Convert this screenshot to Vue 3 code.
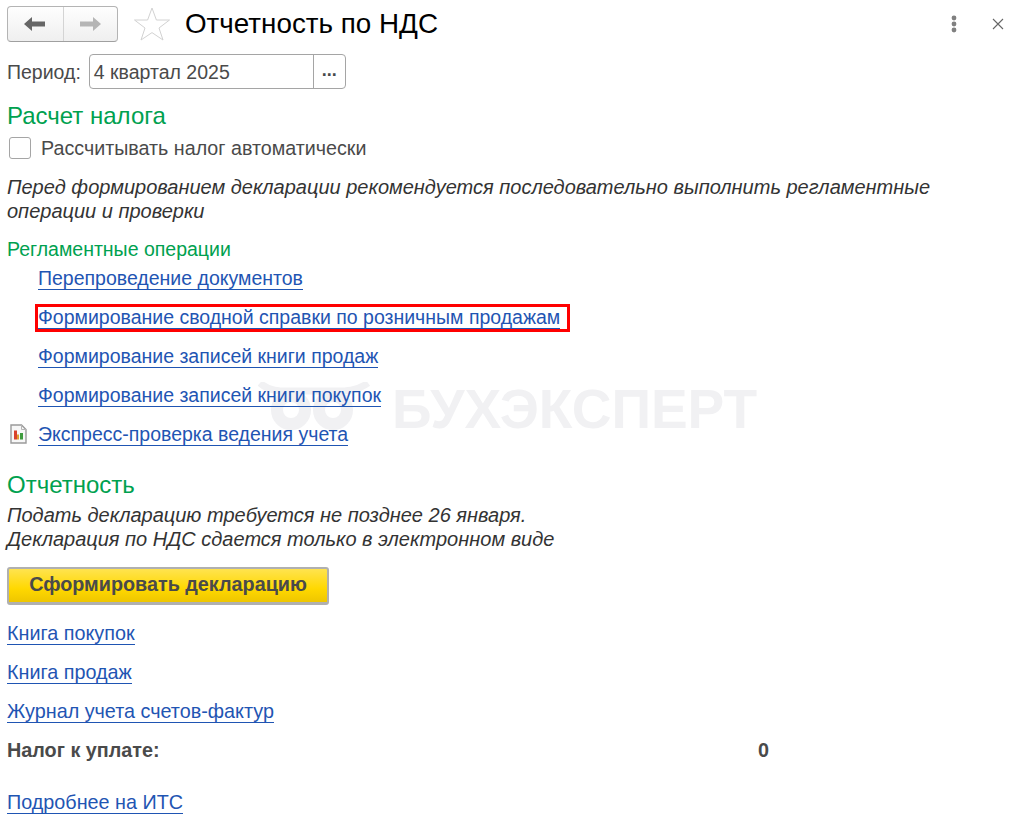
<template>
  <div class="page">
    <div class="watermark">
      <svg class="wm-logo" width="116" height="54" viewBox="0 0 116 54">
        <path d="M2 1 C12 10 24 9 34 9 L74 9 C84 9 98 10 110 1" fill="none" stroke="#f1f1f3" stroke-width="7" />
        <circle cx="33" cy="28" r="14" fill="none" stroke="#f1f1f3" stroke-width="12" />
        <circle cx="75" cy="28" r="14" fill="none" stroke="#f1f1f3" stroke-width="12" />
      </svg>
      <span>БУХЭКСПЕРТ</span>
    </div>

    <div class="header">
      <div class="nav">
        <button class="nav-btn">
          <svg width="22" height="16" viewBox="0 0 22 16"><path d="M0 8 L8 1 V5.5 H21 V10.5 H8 V15 Z" fill="#666" /></svg>
        </button>
        <button class="nav-btn">
          <svg width="22" height="16" viewBox="0 0 22 16"><path d="M22 8 L14 1 V5.5 H1 V10.5 H14 V15 Z" fill="#b5b5b5" /></svg>
        </button>
      </div>
      <svg class="star" width="38" height="34" viewBox="0 0 38 34">
        <path d="M19 1 L23.4 13 L36.5 13 L26 21 L30 33 L19 25.6 L8 33 L12 21 L1.5 13 L14.6 13 Z" fill="none" stroke="#d2d2d2" stroke-width="1" />
      </svg>
      <h1>Отчетность по НДС</h1>
      <div class="window-btns">
        <svg width="8" height="18" viewBox="0 0 8 18">
          <circle cx="4" cy="3" r="2.4" fill="#808080" />
          <circle cx="4" cy="9" r="2.4" fill="#808080" />
          <circle cx="4" cy="15" r="2.4" fill="#808080" />
        </svg>
        <svg width="12" height="12" viewBox="0 0 12 12">
          <path d="M1 1 L11 11 M11 1 L1 11" stroke="#666" stroke-width="1.1" fill="none" />
        </svg>
      </div>
    </div>

    <div class="period">
      <span class="period-label">Период:</span>
      <div class="period-input">
        <span class="period-value">4 квартал 2025</span>
        <span class="period-pick">...</span>
      </div>
    </div>

    <h2 class="section">Расчет налога</h2>
    <label class="check">
      <span class="box"></span>
      <span>Рассчитывать налог автоматически</span>
    </label>
    <p class="note first">Перед формированием декларации рекомендуется последовательно выполнить регламентные<br />операции и проверки</p>

    <h3 class="group">Регламентные операции</h3>
    <div class="ops">
      <div v-for="op in operations" :key="op.text" class="op" :class="{ marked: op.marked }">
        <svg v-if="op.icon" class="op-icon" width="17" height="20" viewBox="0 0 17 20">
          <path d="M1 1 H11.5 L16 5.5 V19 H1 Z" fill="#f7f7f7" stroke="#9a9a9a" stroke-width="1.4" />
          <path d="M11.5 1 V5.5 H16" fill="none" stroke="#b5b5b5" />
          <rect x="4" y="6.5" width="3" height="9" fill="#d9412b" />
          <rect x="7" y="10.5" width="2" height="5" fill="#e0a030" />
          <rect x="10" y="9" width="3" height="6.5" fill="#3f9c3f" />
        </svg>
        <a href="#" @click.prevent>{{ op.text }}</a>
      </div>
    </div>

    <h2 class="section report">Отчетность</h2>
    <p class="note report-note">Подать декларацию требуется не позднее 26 января.<br />Декларация по НДС сдается только в электронном виде</p>

    <button class="primary">Сформировать декларацию</button>

    <div class="links">
      <a v-for="l in links" :key="l" href="#" @click.prevent>{{ l }}</a>
    </div>

    <div class="tax">
      <b class="tax-label">Налог к уплате:</b>
      <b class="tax-value">0</b>
    </div>

    <a class="its" href="#" @click.prevent>Подробнее на ИТС</a>
  </div>
</template>

<script setup>
const operations = [
  { text: 'Перепроведение документов' },
  { text: 'Формирование сводной справки по розничным продажам', marked: true },
  { text: 'Формирование записей книги продаж' },
  { text: 'Формирование записей книги покупок' },
  { text: 'Экспресс-проверка ведения учета', icon: true }
]

const links = ['Книга покупок', 'Книга продаж', 'Журнал учета счетов-фактур']
</script>

<style>
html, body {
  background: #fff;
}
</style>

<style scoped>
.page {
  position: relative;
  width: 1012px;
  height: 821px;
  overflow: hidden;
  box-sizing: border-box;
  padding: 5px 7px 0;
  font-family: "Liberation Sans", Arial, sans-serif;
  font-size: 19.5px;
  line-height: 22px;
  color: #4a4a4a;
  background: #fff;
}

.watermark {
  position: absolute;
  left: 258px;
  top: 382px;
  display: flex;
  align-items: center;
  gap: 18px;
  font-size: 55px;
  line-height: 54px;
  font-weight: bold;
  color: #f1f1f3;
}

.wm-logo {
  width: 116px;
  height: 54px;
}

.header {
  position: relative;
  display: flex;
  align-items: center;
  height: 38px;
}

.nav {
  display: flex;
  width: 111px;
  height: 36px;
  box-sizing: border-box;
  border: 1px solid #b4b4b4;
  border-bottom-color: #a0a0a0;
  border-radius: 4px;
  background: linear-gradient(#fefefe, #efefef);
}

.nav-btn {
  width: 55px;
  padding: 0;
  border: none;
  background: none;
  display: flex;
  align-items: center;
  justify-content: center;
}

.nav-btn + .nav-btn {
  border-left: 1px solid #d4d4d4;
}

.star {
  margin-left: 15px;
}

h1 {
  margin: 0 0 0 14px;
  font-size: 27.8px;
  line-height: 36px;
  font-weight: normal;
  color: #000;
}

.window-btns {
  margin-left: auto;
  margin-right: 1px;
  display: flex;
  align-items: center;
  gap: 34px;
}

.period {
  display: flex;
  align-items: center;
  gap: 8px;
  margin-top: 10px;
  height: 36px;
}

.period-label {
  padding-top: 1px;
}

.period-input {
  display: flex;
  width: 257px;
  height: 35px;
  box-sizing: border-box;
  border: 1px solid #a5a5a5;
  border-radius: 4px;
  background: #fff;
}

.period-value {
  flex: 1;
  padding-left: 4px;
  line-height: 34px;
}

.period-pick {
  width: 31px;
  border-left: 1px solid #a5a5a5;
  text-align: center;
  font-size: 18px;
  font-weight: bold;
  line-height: 30px;
}

.section {
  margin: 0;
  font-size: 24px;
  line-height: 26px;
  font-weight: normal;
  color: #00a14f;
}

.period + .section {
  margin-top: 14px;
}

.check {
  display: flex;
  align-items: center;
  gap: 10px;
  margin-top: 7px;
  height: 24px;
  padding-left: 2px;
  font-size: 19.7px;
}

.box {
  width: 22px;
  height: 22px;
  box-sizing: border-box;
  border: 1px solid #a5a5a5;
  border-radius: 3px;
}

.note {
  margin: 0;
  font-size: 20px;
  font-style: italic;
  line-height: 24px;
  color: #333;
}

.note.first {
  margin-top: 15px;
}

.note.report-note {
  margin-top: 5px;
}

.group {
  margin: 15px 0 0;
  font-size: 19.5px;
  line-height: 22px;
  font-weight: normal;
  color: #00a14f;
}

.ops {
  margin-top: 6px;
}

.op {
  position: relative;
  height: 39px;
  padding-left: 31px;
  line-height: 24px;
}

.op-icon {
  position: absolute;
  left: 3px;
  top: 2px;
}

a {
  color: #1f55b3;
  text-decoration: none;
  border-bottom: 1px solid #1f55b3;
}

.op.marked::after {
  content: "";
  position: absolute;
  left: 28px;
  top: -1px;
  width: 535px;
  height: 28px;
  box-sizing: border-box;
  border: 3px solid #f00;
}

.section.report {
  margin-top: 11px;
}

.primary {
  display: block;
  margin-top: 16px;
  width: 322px;
  height: 38px;
  padding: 0 0 2px;
  border: 2px solid #b0b0b0;
  border-bottom-width: 3px;
  border-radius: 3px;
  background: linear-gradient(#ffe34f, #ffd800 60%, #eec600);
  font-family: inherit;
  font-size: 19.8px;
  font-weight: bold;
  color: #4a4a4a;
}

.links {
  display: flex;
  flex-direction: column;
  align-items: flex-start;
  gap: 16px;
  margin-top: 17px;
  font-size: 19.8px;
}

.links a {
  line-height: 22px;
}

.tax {
  display: flex;
  margin-top: 15px;
  height: 24px;
  align-items: center;
  font-size: 19.8px;
}

.tax-label {
  width: 751px;
}

.its {
  display: inline-block;
  margin-top: 29px;
  line-height: 22px;
  font-size: 19.8px;
}
</style>
